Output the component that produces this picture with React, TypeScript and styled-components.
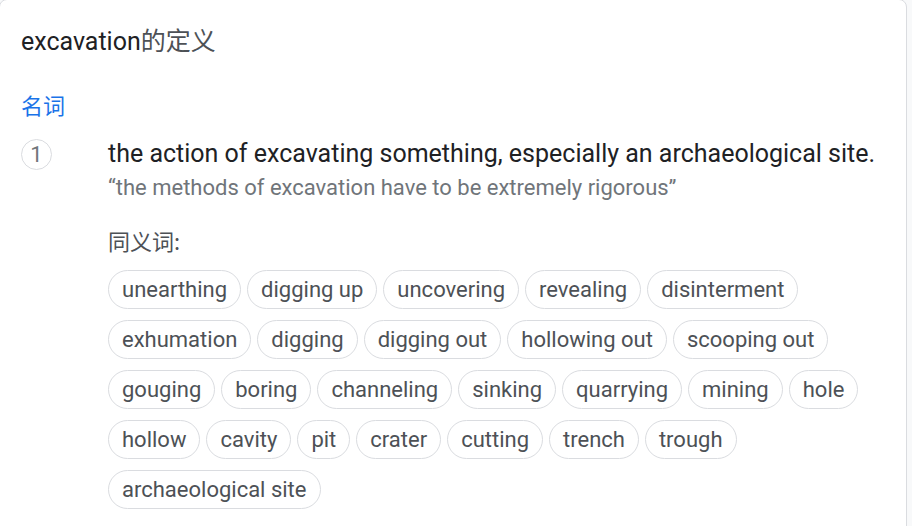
import React from "react";
import styled, { createGlobalStyle } from "styled-components";

const Global = createGlobalStyle`
  html, body { margin: 0; padding: 0; background: #f8f9fa; }
  body { width: 912px; height: 526px; overflow: hidden; font-family: Roboto, "Noto Sans CJK SC", sans-serif; }
`;

const Page = styled.div`
  display: flex;
  padding-right: 5px;
  height: 526px;
  overflow: hidden;
`;

const Card = styled.div`
  flex: 1;
  margin: -1px 0 0 -1px;
  min-height: 600px;
  background: #fff;
  border: 1px solid #dadce0;
  border-radius: 8px;
  padding: 27px 0 0 21px;
`;

const Title = styled.h1`
  margin: 0;
  font-family: Roboto, "Noto Sans CJK SC", sans-serif;
  font-weight: 400;
  font-size: 25px;
  line-height: 30px;
  color: #202124;
  span { color: #4d5156; }
`;

const Pos = styled.div`
  margin-top: 34px;
  font-family: "Noto Sans CJK SC", sans-serif;
  font-size: 22px;
  line-height: 26px;
  color: #1a73e8;
`;

const Sense = styled.div`
  display: grid;
  grid-template-columns: 87px 1fr;
  align-items: start;
  margin-top: 23px;
`;

const Num = styled.div`
  width: 29px;
  height: 29px;
  border: 1px solid #dadce0;
  border-radius: 50%;
  display: flex;
  align-items: center;
  justify-content: center;
  font-size: 22px;
  color: #70757a;
  margin-top: -1px;
`;

const Body = styled.div`
  display: flex;
  flex-direction: column;
`;

const Def = styled.div`
  font-size: 25px;
  line-height: 34px;
  color: #202124;
  margin-top: -3px;
`;

const Example = styled.div`
  margin-top: 2px;
  font-size: 22px;
  line-height: 30px;
  color: #70757a;
`;

const SynLabel = styled.div`
  margin-top: 24px;
  font-family: "Noto Sans CJK SC", sans-serif;
  font-size: 22px;
  line-height: 26px;
  color: #4d5156;
`;

const Chips = styled.div`
  display: flex;
  flex-wrap: wrap;
  gap: 11px 6px;
  margin-top: 17px;
  width: 770px;
`;

const Chip = styled.div`
  box-sizing: border-box;
  height: 39px;
  padding: 0 13px;
  border: 1px solid #dadce0;
  border-radius: 20px;
  display: flex;
  align-items: center;
  font-size: 22px;
  color: #4d5156;
  white-space: nowrap;
`;

const synonyms = [
  "unearthing", "digging up", "uncovering", "revealing", "disinterment",
  "exhumation", "digging", "digging out", "hollowing out", "scooping out",
  "gouging", "boring", "channeling", "sinking", "quarrying", "mining", "hole",
  "hollow", "cavity", "pit", "crater", "cutting", "trench", "trough",
  "archaeological site",
];

export default function App() {
  return (
    <>
      <Global />
      <Page>
        <Card>
          <Title>excavation<span>的定义</span></Title>
          <Pos>名词</Pos>
          <Sense>
            <Num>1</Num>
            <Body>
              <Def>the action of excavating something, especially an archaeological site.</Def>
              <Example>“the methods of excavation have to be extremely rigorous”</Example>
              <SynLabel>同义词:</SynLabel>
              <Chips>
                {synonyms.map((s) => (
                  <Chip key={s}>{s}</Chip>
                ))}
              </Chips>
            </Body>
          </Sense>
        </Card>
      </Page>
    </>
  );
}
